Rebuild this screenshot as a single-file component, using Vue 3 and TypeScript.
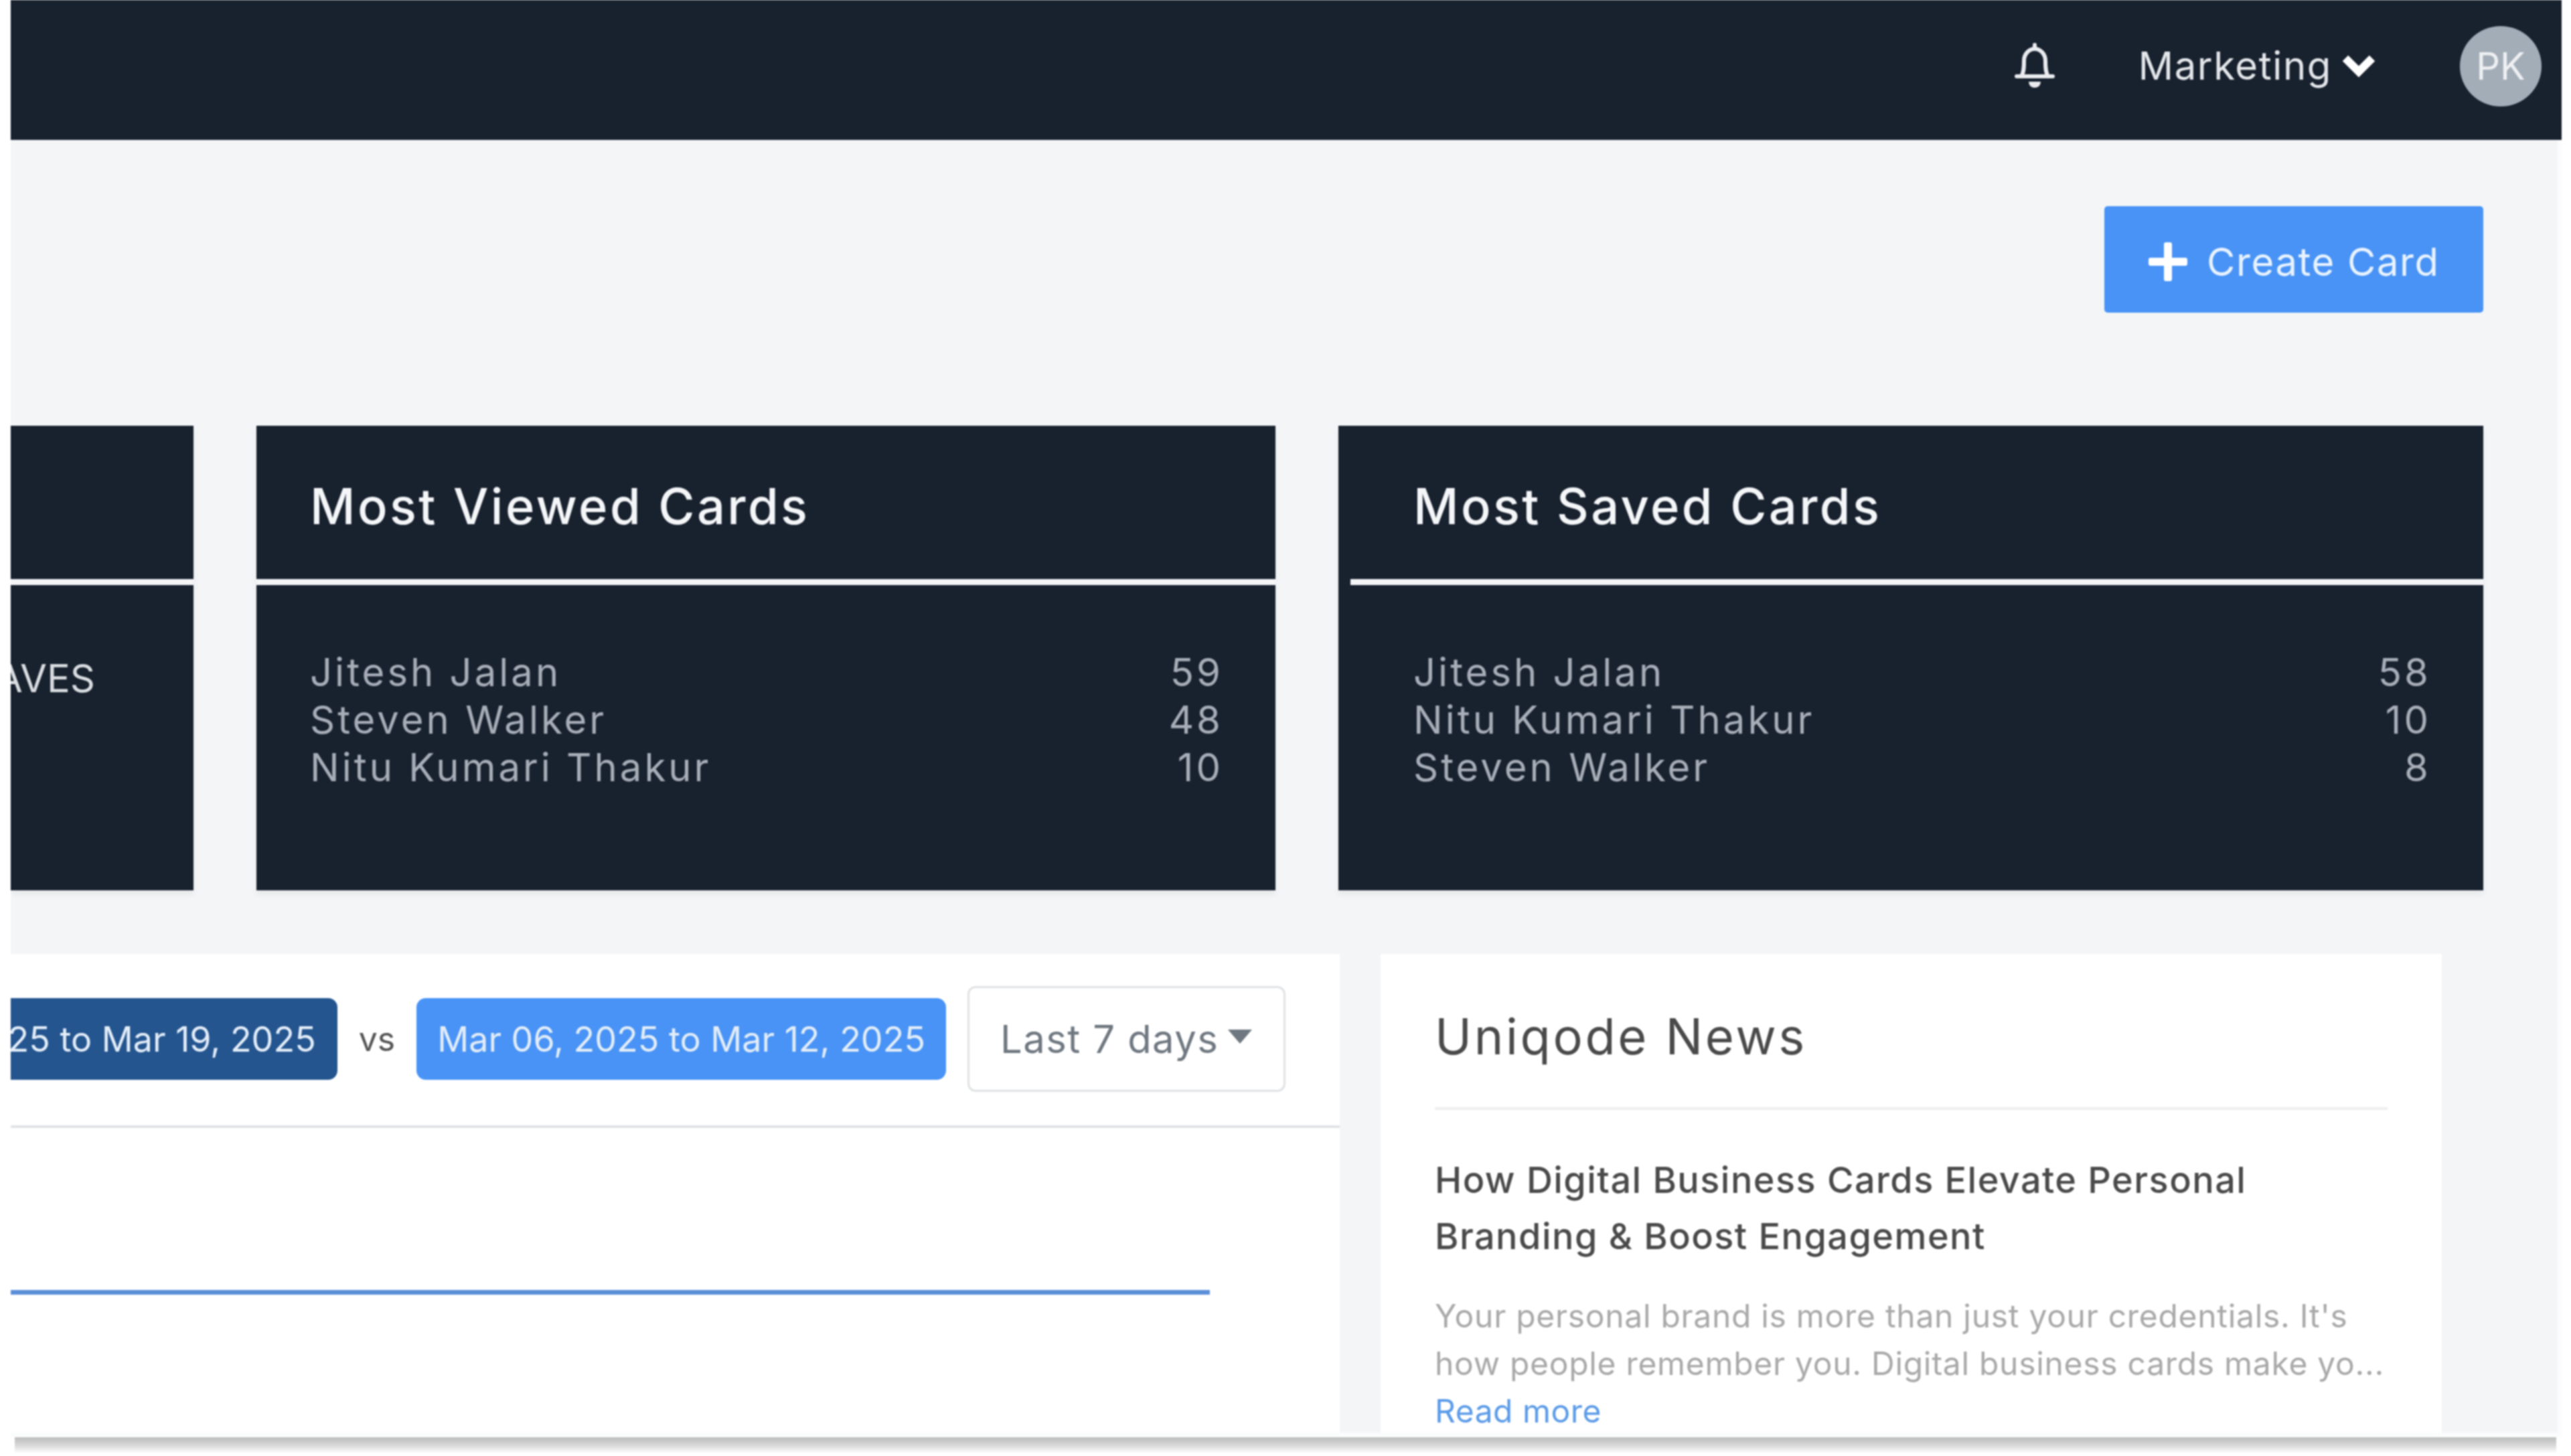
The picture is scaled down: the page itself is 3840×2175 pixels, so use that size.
<script setup lang="ts">
interface Row { name: string; count: number }
const viewed: Row[] = [
  { name: 'Jitesh Jalan', count: 59 },
  { name: 'Steven Walker', count: 48 },
  { name: 'Nitu Kumari Thakur', count: 10 },
]
const saved: Row[] = [
  { name: 'Jitesh Jalan', count: 58 },
  { name: 'Nitu Kumari Thakur', count: 10 },
  { name: 'Steven Walker', count: 8 },
]
</script>

<template>
  <div class="page">
    <div class="window">
      <header class="nav">
        <svg class="bell" viewBox="0 0 60 68" fill="none" stroke="#e9ebee" stroke-width="6" stroke-linejoin="round" stroke-linecap="round">
          <path d="M30 3v6M3 50h54M10 50c4-6 4-15 4-23 0-11 8-18 16-18s16 7 16 18c0 8 0 17 4 23" />
          <path d="M22 59h16c-1 5-4 7-8 7s-7-2-8-7z" fill="#e9ebee" stroke-width="2" />
        </svg>
        <span class="team">Marketing</span>
        <svg class="chev" viewBox="0 0 50 36" fill="none" stroke="#fff" stroke-width="12">
          <path d="M5 7l20 20L45 7" />
        </svg>
        <div class="avatar">PK</div>
      </header>

      <main class="main">
        <div class="actions">
          <button class="create">
            <svg class="plus" viewBox="0 0 58 58" fill="#fff">
              <rect x="23" y="0" width="12" height="58" rx="3" />
              <rect x="0" y="23" width="58" height="12" rx="3" />
            </svg>
            <span>Create Card</span>
          </button>
        </div>

        <section class="cards">
          <article class="card stub">
            <div class="head"></div>
            <div class="rule"></div>
            <div class="stub-body"><span>SAVES</span></div>
          </article>

          <article class="card">
            <div class="head"><h2>Most Viewed Cards</h2></div>
            <div class="rule"></div>
            <ul class="list">
              <li v-for="r in viewed" :key="r.name"><span>{{ r.name }}</span><span>{{ r.count }}</span></li>
            </ul>
          </article>

          <article class="card wide">
            <div class="head"><h2>Most Saved Cards</h2></div>
            <div class="rule inset"></div>
            <ul class="list">
              <li v-for="r in saved" :key="r.name"><span>{{ r.name }}</span><span>{{ r.count }}</span></li>
            </ul>
          </article>
        </section>

        <section class="lower">
          <div class="panel">
            <div class="toolbar">
              <span class="pill dark">Mar 13, 2025 to Mar 19, 2025</span>
              <span class="vs">vs</span>
              <span class="pill light">Mar 06, 2025 to Mar 12, 2025</span>
              <span class="range">Last 7 days<i class="caret"></i></span>
            </div>
            <div class="chart"><div class="series"></div></div>
          </div>

          <aside class="news">
            <h3>Uniqode News</h3>
            <h4>How Digital Business Cards Elevate Personal Branding &amp; Boost Engagement</h4>
            <p>Your personal brand is more than just your credentials. It's<br />how people remember you. Digital business cards make yo...</p>
            <a class="more">Read more</a>
          </aside>
        </section>
      </main>
    </div>
    <div class="drop"></div>
  </div>
</template>

<style>
html, body { margin: 0; background: #fff; }
</style>

<style scoped>
.page {
  width: 3840px;
  height: 2175px;
  overflow: hidden;
  background: #fff;
  filter: blur(0.8px);
}
.window {
  margin-left: 16px;
  width: 3810px;
  height: 2147px;
  display: flex;
  flex-direction: column;
  overflow: hidden;
  font-family: Inter, "Liberation Sans", sans-serif;
}
.drop {
  margin-left: 22px;
  width: 3796px;
  height: 24px;
  background: linear-gradient(to bottom, #bcbcbc, #d8d8d8 50%, #fff);
}
.nav {
  height: 209px;
  flex: none;
  background: #18212e;
  display: flex;
  align-items: center;
  padding-right: 30px;
  color: #e4e7ea;
}
.bell { width: 60px; height: 68px; margin-right: 125px; margin-top: -14px; margin-left: auto; }
.team { font-size: 58px; letter-spacing: 1.6px; margin-top: -14px; }
.chev { width: 50px; height: 36px; margin-left: 15px; margin-right: 126px; margin-top: -14px; }
.avatar {
  width: 122px;
  height: 120px;
  margin-top: -12px;
  border-radius: 50%;
  background: #a3adb8;
  color: #eef0f2;
  font-size: 56px;
  display: flex;
  align-items: center;
  justify-content: center;
}
.main {
  flex: 1;
  min-height: 0;
  display: flex;
  flex-direction: column;
  background: #f3f5f7;
  border-right: 6px solid #fbfcfc;
  border-bottom: 7px solid #fbfcfc;
  padding: 99px 111px 0 0;
  overflow: hidden;
}
.actions { display: flex; justify-content: flex-end; }
.create {
  width: 566px;
  height: 159px;
  border: 0;
  border-radius: 5px;
  background: #4893f5;
  color: #e9f3ff;
  font: inherit;
  font-size: 58px;
  letter-spacing: 1.6px;
  display: flex;
  align-items: center;
  gap: 29px;
  padding: 6px 0 0 66px;
}
.plus { width: 58px; height: 58px; flex: none; }
.cards {
  margin-top: 169px;
  display: grid;
  grid-template-columns: 273px 1522px 1710px;
  column-gap: 94px;
}
.card {
  height: 694px;
  background: #18212e;
  display: flex;
  flex-direction: column;
  box-shadow: 0 6px 10px rgba(0, 0, 0, 0.06);
  overflow: hidden;
}
.head { height: 229px; flex: none; display: flex; align-items: center; padding: 0 80px; }
.head h2 { margin: 0; font-size: 74px; font-weight: 500; color: #f4f6f8; letter-spacing: 3.4px; padding-top: 10px; }
.wide .head { padding-left: 112px; }
.rule { height: 9px; background: #f3f5f7; flex: none; }
.rule.inset { margin-left: 18px; }
.list { list-style: none; margin: 95px 0 0; padding: 0 78px 0 80px; color: #a7aeb8; font-size: 58px; letter-spacing: 4px; }
.list li { height: 71px; line-height: 71px; display: flex; justify-content: space-between; }
.wide .list { padding-left: 112px; }
.stub-body {
  display: flex;
  justify-content: flex-end;
  padding: 104px 147px 0 0;
  color: #d9dde1;
  font-size: 58px;
}
.stub-body span { flex: none; }
.lower {
  margin-top: 95px;
  flex: 1;
  min-height: 0;
  display: grid;
  grid-template-columns: 1985px 1585px;
  column-gap: 61px;
}
.panel { background: #fff; display: flex; flex-direction: column; min-width: 0; overflow: hidden; }
.toolbar {
  height: 260px;
  flex: none;
  border-bottom: 4px solid #e1e3e6;
  display: flex;
  align-items: center;
  justify-content: flex-end;
  padding: 0 81px 2px 0;
  box-sizing: border-box;
}
.pill {
  flex: none;
  height: 122px;
  border-radius: 14px;
  display: flex;
  align-items: center;
  padding: 0 32px;
  font-size: 52px;
  letter-spacing: 0;
  color: #e3edf8;
}
.pill.dark { background: #24558f; }
.pill.light { background: #4893f5; padding: 0 31px; }
.vs { flex: none; margin: 0 32px; font-size: 50px; color: #555; }
.range {
  flex: none;
  margin-left: 32px;
  width: 475px;
  height: 158px;
  box-sizing: border-box;
  border: 3px solid #e0e2e4;
  border-radius: 12px;
  display: flex;
  align-items: center;
  padding-left: 46px;
  font-size: 58px;
  letter-spacing: 1.4px;
  color: #6f7780;
}
.caret {
  margin: -8px 0 0 14px;
  border-left: 18px solid transparent;
  border-right: 18px solid transparent;
  border-top: 21px solid #6f7780;
}
.chart { flex: 1; padding-top: 242px; }
.series { width: 1791px; height: 7px; background: #5b8fd8; }
.news {
  background: #fff;
  padding: 0 81px;
  color: #4a4a4a;
  overflow: hidden;
}
.news h3 {
  margin: 0;
  height: 233px;
  box-sizing: border-box;
  padding-top: 78px;
  border-bottom: 4px solid #eeeff0;
  font-size: 74px;
  line-height: 90px;
  font-weight: 400;
  letter-spacing: 3.6px;
}
.news h4 {
  margin: 63px 0 0;
  font-size: 54px;
  line-height: 84px;
  font-weight: 500;
  letter-spacing: 1.45px;
}
.news p {
  margin: 41px 0 0;
  font-size: 48px;
  line-height: 71px;
  color: #a9a9a9;
  white-space: nowrap;
  letter-spacing: 0.7px;
}
.more { display: block; font-size: 48px; line-height: 71px; color: #5b9be8; letter-spacing: 0.5px; }
</style>
